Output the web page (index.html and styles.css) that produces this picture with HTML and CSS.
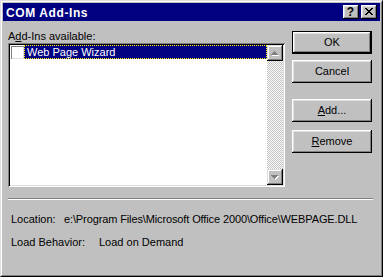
FILE: index.html
```html
<!DOCTYPE html>
<html>
<head>
<meta charset="utf-8">
<link rel="stylesheet" href="styles.css">
</head>
<body>
<div class="window">
  <div class="frame">
    <div class="titlebar">
      <span class="title">COM Add-Ins</span>
      <div class="caps">
        <div class="cap help">?</div>
        <div class="cap close">
          <svg width="16" height="14" viewBox="0 0 16 14" shape-rendering="crispEdges">
            <g fill="#000">
              <rect x="4" y="3" width="2" height="1"/><rect x="10" y="3" width="2" height="1"/>
              <rect x="5" y="4" width="2" height="1"/><rect x="9" y="4" width="2" height="1"/>
              <rect x="6" y="5" width="4" height="1"/>
              <rect x="7" y="6" width="2" height="1"/>
              <rect x="6" y="7" width="4" height="1"/>
              <rect x="5" y="8" width="2" height="1"/><rect x="9" y="8" width="2" height="1"/>
              <rect x="4" y="9" width="2" height="1"/><rect x="10" y="9" width="2" height="1"/>
            </g>
          </svg>
        </div>
      </div>
    </div>
    <div class="body">
      <div class="top">
        <div class="left">
          <div class="label">A<u>d</u>d-Ins available:</div>
          <div class="listbox">
            <div class="items">
              <div class="item">
                <span class="check"></span>
                <span class="name">Web Page Wizard</span>
              </div>
            </div>
            <div class="scrollbar">
              <div class="sbtn">
                <svg width="16" height="16" viewBox="0 0 16 16" shape-rendering="crispEdges">
                  <g fill="#fff">
                    <rect x="8" y="7" width="1" height="1"/><rect x="7" y="8" width="3" height="1"/>
                    <rect x="6" y="9" width="5" height="1"/><rect x="5" y="10" width="7" height="1"/>
                  </g>
                  <g fill="#808080">
                    <rect x="7" y="6" width="1" height="1"/><rect x="6" y="7" width="3" height="1"/>
                    <rect x="5" y="8" width="5" height="1"/><rect x="4" y="9" width="7" height="1"/>
                  </g>
                </svg>
              </div>
              <div class="track"></div>
              <div class="sbtn">
                <svg width="16" height="16" viewBox="0 0 16 16" shape-rendering="crispEdges">
                  <g fill="#fff">
                    <rect x="5" y="7" width="7" height="1"/><rect x="6" y="8" width="5" height="1"/>
                    <rect x="7" y="9" width="3" height="1"/><rect x="8" y="10" width="1" height="1"/>
                  </g>
                  <g fill="#808080">
                    <rect x="4" y="6" width="7" height="1"/><rect x="5" y="7" width="5" height="1"/>
                    <rect x="6" y="8" width="3" height="1"/><rect x="7" y="9" width="1" height="1"/>
                  </g>
                </svg>
              </div>
            </div>
          </div>
        </div>
        <div class="buttons">
          <div class="btn default">OK</div>
          <div class="btn cancel">Cancel</div>
          <div class="btn add"><u>A</u>dd...</div>
          <div class="btn remove"><u>R</u>emove</div>
        </div>
      </div>
      <div class="sep"></div>
      <div class="info">
        <div class="row"><span class="key key-loc">Location:</span><span class="val path">e:\Program Files\Microsoft Office 2000\Office\WEBPAGE.DLL</span></div>
        <div class="row"><span class="key key-beh">Load Behavior:</span><span class="val">Load on Demand</span></div>
      </div>
    </div>
  </div>
</div>
</body>
</html>
```
FILE: styles.css
```css
html, body {
  margin: 0;
  padding: 0;
  background: #c0c0c0;
}
body {
  font-family: "Liberation Sans", Arial, sans-serif;
  font-size: 11px;
  color: #000;
}
.window {
  width: 383px;
  height: 277px;
  box-sizing: border-box;
  border: 1px solid;
  border-color: #dfdfdf #000 #000 #dfdfdf;
  background: #c0c0c0;
}
.frame {
  height: 100%;
  box-sizing: border-box;
  border: 1px solid;
  border-color: #fff #808080 #808080 #fff;
  padding: 1px;
  display: flex;
  flex-direction: column;
}
.titlebar {
  height: 18px;
  background: #000080;
  display: flex;
  align-items: center;
  padding: 0 3px 0 3px;
}
.title {
  flex: 1;
  color: #fff;
  font-weight: bold;
  font-size: 12px;
  letter-spacing: 0.6px;
  line-height: 14px;
  padding-top: 1px;
}
.caps {
  display: flex;
  gap: 2px;
}
.cap {
  width: 16px;
  height: 14px;
  box-sizing: border-box;
  background: #c0c0c0;
  box-shadow: inset -1px -1px #000, inset 1px 1px #fff, inset -2px -2px #808080, inset 2px 2px #dfdfdf;
  display: flex;
  align-items: center;
  justify-content: center;
}
.cap svg { display: block; }
.help {
  font-weight: bold;
  font-size: 12px;
  line-height: 14px;
  padding-right: 1px;
}
.body {
  flex: 1;
  display: flex;
  flex-direction: column;
}
.top {
  display: flex;
  padding-left: 5px;
}
.left {
  width: 277px;
  padding-top: 9px;
}
.label {
  height: 13px;
  line-height: 13px;
}
.listbox {
  height: 144px;
  box-sizing: border-box;
  padding: 2px;
  background: #fff;
  box-shadow: inset 1px 1px #808080, inset -1px -1px #fff, inset 2px 2px #000, inset -2px -2px #dfdfdf;
  display: flex;
}
.items {
  flex: 1;
}
.item {
  display: flex;
  height: 14px;
  align-items: center;
  padding-left: 1px;
}
.check {
  width: 13px;
  height: 13px;
  box-sizing: border-box;
  background: #fff;
  box-shadow: inset 1px 1px #808080, inset -1px -1px #dfdfdf;
  flex: none;
}
.name {
  flex: 1;
  height: 14px;
  box-sizing: border-box;
  background: #000080;
  color: #fff;
  border: 1px dotted #ffff00;
  line-height: 12px;
  padding-left: 2px;
}
.scrollbar {
  width: 16px;
  display: flex;
  flex-direction: column;
}
.sbtn {
  width: 16px;
  height: 16px;
  background: #c0c0c0;
  box-shadow: inset -1px -1px #000, inset 1px 1px #dfdfdf, inset -2px -2px #808080, inset 2px 2px #fff;
}
.sbtn svg { display: block; }
.track {
  flex: 1;
  background-color: #c0c0c0;
  background-image: conic-gradient(#fff 25%, #c0c0c0 0 50%, #fff 0 75%, #c0c0c0 0);
  background-size: 2px 2px;
}
.buttons {
  margin-left: 7px;
  padding-top: 10px;
  width: 80px;
  display: flex;
  flex-direction: column;
}
.btn {
  height: 23px;
  box-sizing: border-box;
  background: #c0c0c0;
  box-shadow: inset -1px -1px #000, inset 1px 1px #fff, inset -2px -2px #808080, inset 2px 2px #dfdfdf;
  display: flex;
  align-items: center;
  justify-content: center;
  line-height: 13px;
}
.btn.default {
  border: 1px solid #000;
}
.btn.cancel { margin-top: 6px; }
.btn.add { margin-top: 16px; }
.btn.remove { margin-top: 8px; }
.sep {
  margin: 11px 0 0 5px;
  width: 365px;
  height: 0;
  border-top: 1px solid #808080;
  border-bottom: 1px solid #fff;
}
.info {
  padding: 13px 0 0 8px;
}
.row {
  display: flex;
  height: 13px;
  line-height: 13px;
  margin-bottom: 10px;
  white-space: nowrap;
}
.key { flex: none; }
.key-loc { width: 53px; }
.key-beh { width: 88px; }
.path { letter-spacing: -0.12px; }
```
